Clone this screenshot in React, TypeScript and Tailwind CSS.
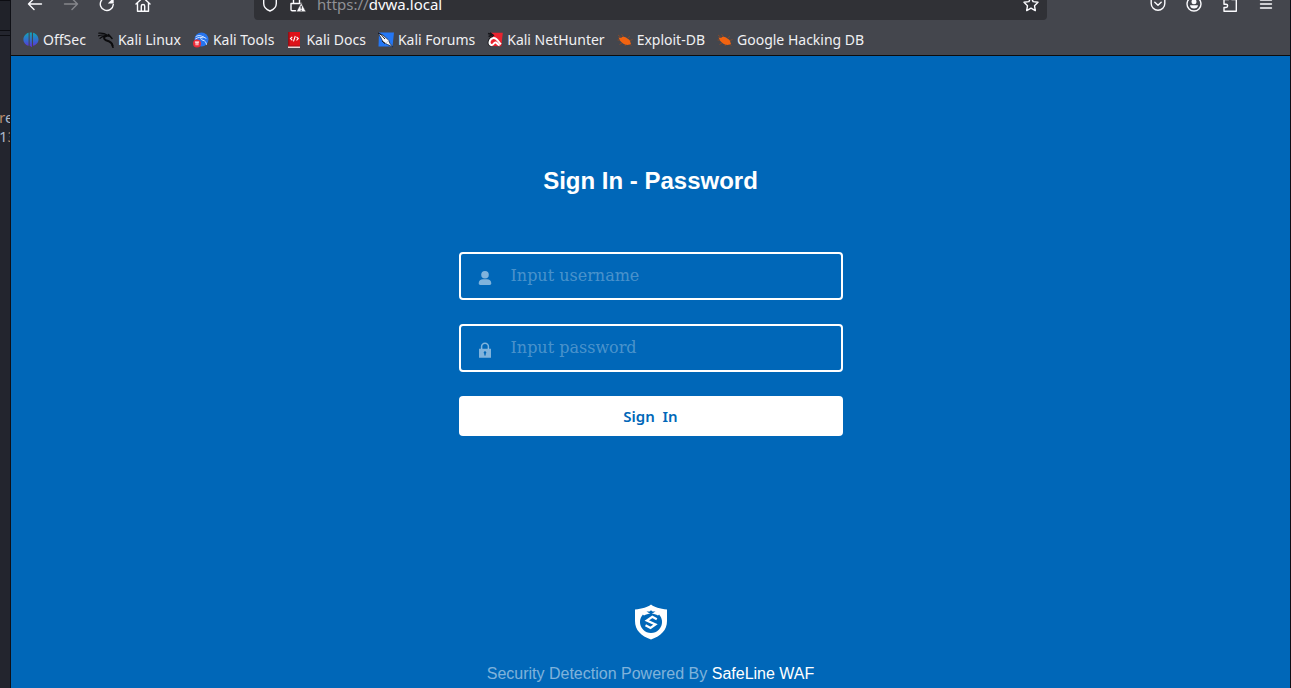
import type { ReactNode } from "react";

const stroke = {
  fill: "none",
  stroke: "currentColor",
  strokeWidth: 1.4,
  strokeLinecap: "round" as const,
  strokeLinejoin: "round" as const,
};

function Icon({ children, className = "size-4" }: { children: ReactNode; className?: string }) {
  return (
    <svg viewBox="0 0 16 16" aria-hidden="true" className={`${className} shrink-0`}>
      {children}
    </svg>
  );
}

function ToolButton({ label, children, dim = false }: { label: string; children: ReactNode; dim?: boolean }) {
  return (
    <button type="button" aria-label={label} disabled={dim} className={dim ? "text-[#85868b]" : "text-[#fbfbfe]"}>
      <Icon>{children}</Icon>
    </button>
  );
}

function BugIcon() {
  return (
    <Icon>
      <path d="M1 3l3 2.500M4.500 2.200L6.500 5M.5 8l4 .3M2.500 12.500l3-2M11 5.800l2-1.500M13 8.500l2.500-1M8 14l1-2.500M14.500 13.500L12.500 12" stroke="#8f4a25" strokeWidth="0.8" fill="none" />
      <path d="M1.500 5.500L4 6c1.200-1.500 3-1.700 5-.5l3.200 2.300c1 1 1.200 2.400 1.800 4.200l-2 .8c-2 .4-4.500-.1-6-1.300L3.300 9z" fill="#f26310" />
    </Icon>
  );
}

const bookmarks: { label: string; icon: ReactNode }[] = [
  {
    label: "OffSec",
    icon: (
      <Icon>
        <defs>
          <linearGradient id="offsec" gradientUnits="userSpaceOnUse" x1="0" y1="0" x2="0" y2="16">
            <stop offset="0" stopColor="#10a9b4" />
            <stop offset="0.550" stopColor="#3568d0" />
            <stop offset="1" stopColor="#6a22d8" />
          </linearGradient>
        </defs>
        <path d="M5.600.8v13C2.600 13 .4 10.500.4 7.500S2.600 1.500 5.600.8zM6.700.5h2.200v14.800l-2.200-1.500zM10 .8c3.100.7 5.500 3.500 5.500 6.700s-2.400 5.600-5.500 6.300z" fill="url(#offsec)" />
      </Icon>
    ),
  },
  {
    label: "Kali Linux",
    icon: (
      <Icon>
        <g fill="none" stroke="#0b0b0d" strokeLinecap="round">
          <path d="M.8 1.200C4 .8 7 1.500 9.500 3.300M.5 3.800C3.500 2.500 6 2.800 8.500 4M2 6.300C4 4.300 6 4.100 8 4.500" strokeWidth="1.200" />
          <path d="M8 4C5.300 4.800 5.500 7.300 8 8.300c3 .8 5.800 1.200 6.500 5.200" strokeWidth="2" />
          <path d="M8 3.800l4 .5 2 2.200M10.500 2.500l2 2.300M14.500 13.500l.5 2" strokeWidth="1.500" />
        </g>
      </Icon>
    ),
  },
  {
    label: "Kali Tools",
    icon: (
      <Icon>
        <circle cx="8.500" cy="7.500" r="7" fill="#2674ee" />
        <path d="M3 4.500c3-1.700 5-1 7 .5M2.500 7c3-2 5-2 7-1.200M10 4.500c-3 1-3 3 0 3.800 2 .4 3 1.700 3.500 4M10 4.800l3 1.500" fill="none" stroke="#d5e6ff" strokeWidth="1" strokeLinecap="round" />
        <circle cx="4" cy="11.500" r="4" fill="#ef2b37" />
        <path d="M1.900 10h4.200M3.100 10v3.300M4.900 10v3.300" stroke="#fff" strokeWidth="1" fill="none" />
      </Icon>
    ),
  },
  {
    label: "Kali Docs",
    icon: (
      <Icon>
        <path d="M2 0h12v14H2z" fill="#dd1118" />
        <path d="M2 0h1.500v13.500H2z" fill="#941016" />
        <path d="M2 14h12v2H2z" fill="#e9d7d5" />
        <path d="M2 13.500h12v1H2z" fill="#a50f15" />
        <path d="M6.300 4.800L4.500 6.600l1.800 1.800M10.500 4.800l1.800 1.800-1.800 1.800M9.300 4L7.500 9.400" fill="none" stroke="#fff" strokeWidth="1.100" />
      </Icon>
    ),
  },
  {
    label: "Kali Forums",
    icon: (
      <Icon>
        <path d="M1 .5h15L14.500 14.500H.5z" fill="#2477f5" />
        <path d="M0 1.500L5 3l5.500 5 1.500 3.500 3 3.500-5.500-2.500L5 10 2.500 5z" fill="#f4f6fb" stroke="#172746" strokeWidth="0.800" />
        <path d="M0 1l3 1.500L7 7M4 9l3 2.500" stroke="#15151a" strokeWidth="1" fill="none" />
        <path d="M10.500 8.500l-2.500 3" stroke="#c6cfdd" />
      </Icon>
    ),
  },
  {
    label: "Kali NetHunter",
    icon: (
      <Icon>
        <path d="M4 .8h11.800L14.300 14.300 2 14z" fill="#e9232f" />
        <path d="M1 1.500l4 1M1.500 4.500l4-1.500M6 4.500C1 6.500-.5 13 4 13.800M3 .8l4 3" stroke="#15151a" strokeWidth="1.400" fill="none" />
        <path d="M14 12.300C11.300 10 10 5.500 6.500 6 2.500 6.500 1.200 12 4.200 13c2.500.8 2.300-3.200 4.600-2.500 1.500.6 2 2.600 3.800 2.700" fill="none" stroke="#fff" strokeWidth="2" />
      </Icon>
    ),
  },
  { label: "Exploit-DB", icon: <BugIcon /> },
  { label: "Google Hacking DB", icon: <BugIcon /> },
];

function BrowserChrome() {
  return (
    <header className="border-b border-[#0c0c0d] bg-[#44464d]">
      <div className="flex h-5 items-end overflow-hidden">
        <div className="flex h-8 w-full items-center">
          <nav aria-label="Navigation" className="flex w-[243px] shrink-0 gap-5 pl-4">
            <ToolButton label="Back">
              <path d="M14.500 8h-13M7 2.500L1.500 8 7 13.500" {...stroke} />
            </ToolButton>
            <ToolButton label="Forward" dim>
              <path d="M1.500 8h13M9 2.500L14.500 8 9 13.500" {...stroke} />
            </ToolButton>
            <ToolButton label="Reload">
              <path d="M14.300 8.500A6.500 6.500 0 1 1 12.500 3.500" {...stroke} />
              <path d="M14.700 1.500v6H8.800z" fill="currentColor" />
            </ToolButton>
            <ToolButton label="Home">
              <path d="M1 8l7-6.500L15 8M2.500 7v8.200h11V7M6.300 15V10c0-1 .7-1.500 1.700-1.500s1.700.5 1.700 1.500v5" {...stroke} />
            </ToolButton>
          </nav>
          <div className="flex h-8 w-[793px] items-center rounded bg-[#303136] px-2 text-[#fbfbfe]">
            <Icon>
              <path d="M8 1l6.300 2v4.500c0 3-2.500 6-6.300 7.500-3.800-1.500-6.300-4.500-6.300-7.500V3z" {...stroke} />
            </Icon>
            <Icon className="ml-3 size-4">
              <path d="M5.500 14.800H2.200A1.200 1.200 0 0 1 1 13.600V7.500h10.500M3.500 7V4a3 3 0 0 1 6 0v3" {...stroke} />
              <path d="M11.200 6.800L16 15.800H6.300z" fill="currentColor" stroke="#303136" strokeWidth="0.600" />
              <path d="M11.200 9.800v3M11.200 13.700v1" stroke="#303136" strokeWidth="1.200" />
            </Icon>
            <a href="https://dvwa.local" className="ml-[11px] flex-1 text-[15px] leading-5 text-[#fbfbfe]">
              <span className="text-[#8f9095]">https://</span>dvwa.local
            </a>
            <button type="button" aria-label="Bookmark this page">
              <Icon>
                <path d="M8 1.200l2.100 4.400 4.900.7-3.500 3.400.8 4.900L8 12.200l-4.300 2.400.8-4.900L1 6.300l4.900-.7z" {...stroke} />
              </Icon>
            </button>
          </div>
          <div className="ml-auto flex gap-5 pr-4">
            <ToolButton label="Save to Pocket">
              <path d="M2.500 1.200h11c.8 0 1.300.5 1.300 1.300V7.500a6.800 6.800 0 0 1-13.600 0V2.500c0-.8.5-1.300 1.300-1.300zM4.800 6.300L8 9.300l3.200-3" {...stroke} />
            </ToolButton>
            <ToolButton label="Account">
              <circle cx="8" cy="8" r="7" {...stroke} />
              <circle cx="8" cy="5.800" r="2.500" fill="currentColor" />
              <path d="M4 9.300h8c0 2-1.700 3.300-4 3.300s-4-1.300-4-3.300z" fill="currentColor" />
            </ToolButton>
            <ToolButton label="Extensions">
              <path d="M2 6.500V3.500h4.500V2.700a1.700 1.700 0 0 1 3.400 0v.8h4.400v11.800H2v-3.800h2a1.600 1.600 0 0 0 0-3.300H2z" {...stroke} />
            </ToolButton>
            <ToolButton label="Menu">
              <path d="M2.500 4h11M2.500 8h11M2.500 12h11" {...stroke} />
            </ToolButton>
          </div>
        </div>
      </div>
      <nav aria-label="Bookmarks" className="flex h-[35px] items-center gap-3 py-1 pt-[9px] pl-3">
        {bookmarks.map(({ label, icon }) => (
          <a key={label} href="#" className="flex items-center gap-1 whitespace-nowrap text-sm leading-4 text-[#f0f0f3]">
            {icon}
            {label}
          </a>
        ))}
      </nav>
    </header>
  );
}

function Field({ id, label, type, icon }: { id: string; label: string; type: string; icon: ReactNode }) {
  return (
    <div className="flex h-12 items-center rounded border-2 border-white px-4">
      <label htmlFor={id} aria-label={label} className="pt-1 text-white/50">
        {icon}
      </label>
      <input
        id={id}
        type={type}
        placeholder={label}
        className="ml-[18px] min-w-0 flex-1 bg-transparent font-['DejaVu_Serif',serif] text-base text-white outline-none placeholder:text-white/30"
      />
    </div>
  );
}

function Shield() {
  return (
    <svg viewBox="0 0 32 36" aria-hidden="true" className="h-9 w-8">
      <path d="M16 .5C19 3 25 5 32 5.500V17c0 9-6 15-16 18.500C6 32 0 26 0 17V5.500C7 5 13 3 16 .5z" fill="#fff" />
      <circle cx="16" cy="18" r="11" fill="#0067b8" />
      <path d="M6 6.500h20v2.500l-3 2.500c-2-1.300-4-1.800-7-1.800s-5 .5-7 1.800L6 9z" fill="#fff" />
      <path d="M11.500 7.500h3l1.500-1.300 1.500 1.300h3L18 9l-2 1.500L14 9z" fill="#0067b8" />
      <path d="M21.800 15.300L17.300 12.800l-5.500 3.700 8.700 4-5 3.500-5-2.700" fill="none" stroke="#fff" strokeWidth="2.200" />
    </svg>
  );
}

export default function App() {
  return (
    <div className="flex h-screen overflow-hidden bg-[#23252e] font-['Noto_Sans',sans-serif]">
      <aside className="w-2.5 shrink-0 overflow-hidden text-[15px] leading-[19px] text-[#a9b6c8]">
        <div className="h-[31px] border-y border-[#0c0d12] bg-[#202229]" />
        <div className="mt-1 border-t border-[#0c0d12] pt-[72px]">
          <p className="whitespace-nowrap">
            <span className="-ml-px text-[#b98a69]">r</span>e
          </p>
          <p className="-ml-px whitespace-nowrap">
            1<span className="text-[#b98a69]">3</span>
          </p>
        </div>
      </aside>
      <div className="flex min-w-0 flex-1 flex-col border-x border-[#0f1016]">
        <BrowserChrome />
        <main className="flex flex-1 flex-col items-center bg-[#0067b8] px-4 pt-[107px]">
          <h1 className="font-['Liberation_Sans',sans-serif] text-2xl leading-9 font-bold text-white">
            Sign In - Password
          </h1>
          <form className="mt-[53px] flex w-full max-w-96 flex-col gap-6" onSubmit={(e) => e.preventDefault()}>
            <Field
              id="username"
              label="Input username"
              type="text"
              icon={
                <Icon>
                  <circle cx="8" cy="4.800" r="3.800" fill="currentColor" />
                  <path d="M1.700 13.300c0-2.800 2-4 4.300-4h4c2.300 0 4.300 1.200 4.300 4 0 1-.6 1.700-1.600 1.700H3.300c-1 0-1.600-.7-1.600-1.700z" fill="currentColor" />
                </Icon>
              }
            />
            <Field
              id="password"
              label="Input password"
              type="password"
              icon={
                <Icon>
                  <path d="M4.600 7V4.600a3.400 3.400 0 0 1 6.800 0V7" fill="none" stroke="currentColor" strokeWidth="1.500" />
                  <path fillRule="evenodd" d="M2 6.800h12v9H2zM8 9.300a1.300 1.300 0 0 0-.7 2.400v1.800h1.400v-1.800A1.300 1.300 0 0 0 8 9.300z" fill="currentColor" />
                </Icon>
              }
            />
            <button type="submit" className="h-10 rounded bg-white text-[15px] font-semibold text-[#0067b8]">
              Sign&nbsp; In
            </button>
          </form>
          <footer className="mt-auto flex flex-col items-center gap-[22px] pb-0.5 font-['Liberation_Sans',sans-serif] text-base text-white/50">
            <Shield />
            <p>
              Security Detection Powered By{" "}
              <a href="#" className="text-white">
                SafeLine WAF
              </a>
            </p>
          </footer>
        </main>
      </div>
    </div>
  );
}
